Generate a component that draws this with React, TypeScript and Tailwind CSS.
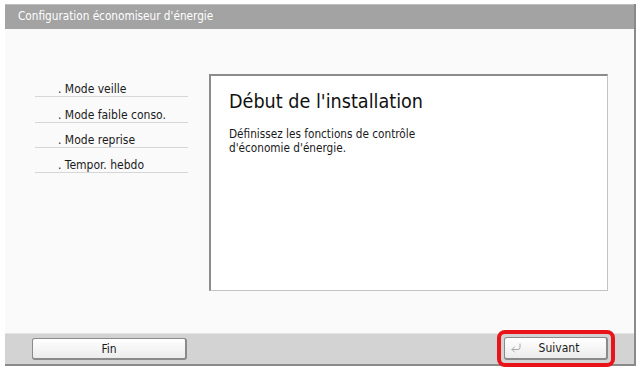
import { CornerDownLeft } from 'lucide-react';

const menu = ['. Mode veille', '. Mode faible conso.', '. Mode reprise', '. Tempor. hebdo'];

export default function App() {
  return (
    <div className="w-[640px] h-[367px] bg-white pt-[4px] pl-[5px] overflow-hidden" style={{ fontFamily: '"DejaVu Sans Condensed", Tahoma, "DejaVu Sans", sans-serif' }}>
      <div className="w-[631px] h-[362px] flex flex-col border-r-[2px] border-b-[2px] border-[#8a8a8a] bg-[#fafafa]">
        <div className="h-[25px] bg-[#a3a3a3] border-t border-[#bdbdbd] flex items-center pl-[13px] text-[11.7px] text-white">
          Configuration économiseur d'énergie
        </div>

        <div className="flex-1 flex pt-[45px]">
          <div className="w-[204px] pl-[30px] -mt-[2px]">
            {menu.map((item) => (
              <div key={item} className="w-[153px] h-[25.3px] border-b border-[#d6d6d6] pl-[23px] flex items-end pb-[1px] text-[12px] leading-[12px] text-[#1a1a1a]">
                {item}
              </div>
            ))}
          </div>

          <div className="w-[399px] h-[217px] bg-white border-l-[2px] border-t-[2px] border-[#8c8c8c] border-r border-b border-r-[#c4c4c4] border-b-[#c4c4c4] pl-[18px] pt-[14px]">
            <h1 className="text-[19.6px] leading-[24px] text-[#111]">Début de l'installation</h1>
            <p className="mt-[13px] text-[11.7px] leading-[14px] text-[#1a1a1a]">
              Définissez les fonctions de contrôle
              <br />
              d'économie d'énergie.
            </p>
          </div>
        </div>

        <div className="h-[31px] bg-[#d3d3d3] border-t border-[#e6e6e6] flex items-center pl-[27px] pr-[19px] justify-between">
          <button className="w-[155px] h-[22px] rounded-[3px] bg-gradient-to-b from-white to-[#ececec] border border-[#8a8a8a] border-b-[2px] border-r-[2px] text-[12px] text-[#1a1a1a]">
            Fin
          </button>
          <div className="rounded-[8px] border-[4px] border-[#e8141a] p-[3px] -mt-[4px] -mb-[2px]">
            <button className="w-[104px] h-[23px] rounded-[3px] bg-gradient-to-b from-white to-[#ececec] border border-[#8a8a8a] border-b-[2px] border-r-[2px] flex items-center text-[12px] text-[#1a1a1a]">
              <CornerDownLeft className="w-[12px] h-[12px] ml-[5px] text-[#a8a8a8]" strokeWidth={2} />
              <span className="flex-1 text-center pr-[10px]">Suivant</span>
            </button>
          </div>
        </div>
      </div>
    </div>
  );
}
